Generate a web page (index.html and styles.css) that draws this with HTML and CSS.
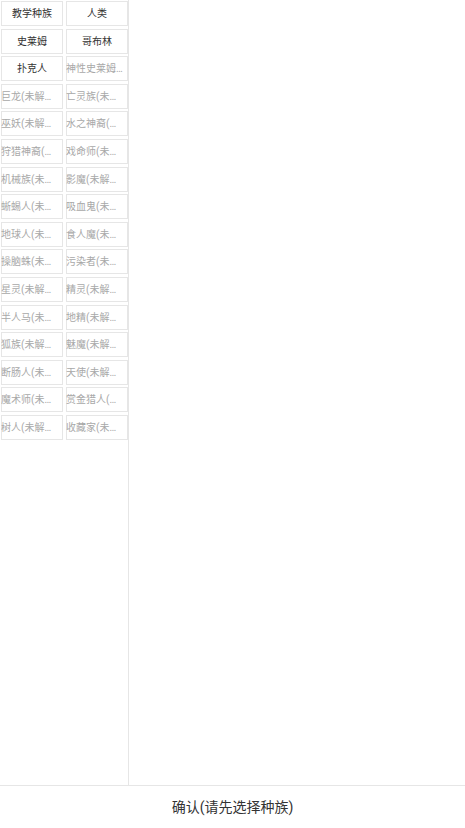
FILE: index.html
```html
<!DOCTYPE html>
<html lang="zh">
<head>
<meta charset="utf-8">
<link rel="stylesheet" href="styles.css">
</head>
<body>
<div class="page">
  <div class="main">
    <div class="side">
      <div class="grid">
        <div class="cell on">教学种族</div>
        <div class="cell on">人类</div>
        <div class="cell on">史莱姆</div>
        <div class="cell on">哥布林</div>
        <div class="cell on">扑克人</div>
        <div class="cell off">神性史莱姆(未解锁)</div>
        <div class="cell off">巨龙(未解锁)</div>
        <div class="cell off">亡灵族(未解锁)</div>
        <div class="cell off">巫妖(未解锁)</div>
        <div class="cell off">水之神裔(未解锁)</div>
        <div class="cell off">狩猎神裔(未解锁)</div>
        <div class="cell off">戏命师(未解锁)</div>
        <div class="cell off">机械族(未解锁)</div>
        <div class="cell off">影魔(未解锁)</div>
        <div class="cell off">蜥蜴人(未解锁)</div>
        <div class="cell off">吸血鬼(未解锁)</div>
        <div class="cell off">地球人(未解锁)</div>
        <div class="cell off">食人魔(未解锁)</div>
        <div class="cell off">操脑蛛(未解锁)</div>
        <div class="cell off">污染者(未解锁)</div>
        <div class="cell off">星灵(未解锁)</div>
        <div class="cell off">精灵(未解锁)</div>
        <div class="cell off">半人马(未解锁)</div>
        <div class="cell off">地精(未解锁)</div>
        <div class="cell off">狐族(未解锁)</div>
        <div class="cell off">魅魔(未解锁)</div>
        <div class="cell off">断肠人(未解锁)</div>
        <div class="cell off">天使(未解锁)</div>
        <div class="cell off">魔术师(未解锁)</div>
        <div class="cell off">赏金猎人(未解锁)</div>
        <div class="cell off">树人(未解锁)</div>
        <div class="cell off">收藏家(未解锁)</div>
      </div>
    </div>
    <div class="content"></div>
  </div>
  <div class="footer">确认(请先选择种族)</div>
</div>
</body>
</html>
```
FILE: styles.css
```css
html, body {
  margin: 0;
  padding: 0;
  background: #fff;
}
body {
  font-family: Roboto, "Noto Sans CJK SC", sans-serif;
  color: #333;
}
.page {
  display: flex;
  flex-direction: column;
  height: 828px;
}
.main {
  flex: 1;
  display: flex;
  min-height: 0;
}
.side {
  width: 128px;
  border-right: 1px solid #e6e6e6;
}
.grid {
  display: grid;
  grid-template-columns: 62px 62px;
  column-gap: 3px;
  row-gap: 2.6px;
  padding: 1px 0 0 1px;
}
.cell {
  height: 25px;
  box-sizing: border-box;
  box-shadow: inset 0 0 0 1px #e6e6e6;
  font-size: 10px;
  line-height: 25px;
  white-space: nowrap;
  overflow: hidden;
  text-overflow: ellipsis;
}
.cell.on {
  color: #333;
  text-align: center;
}
.cell.off {
  color: #a8a8a8;
  text-align: left;
  padding-right: 5.2px;
}
.content {
  flex: 1;
}
.footer {
  height: 42px;
  border-top: 1px solid #e6e6e6;
  text-align: center;
  font-size: 14px;
  line-height: 42px;
  color: #333;
}
```
